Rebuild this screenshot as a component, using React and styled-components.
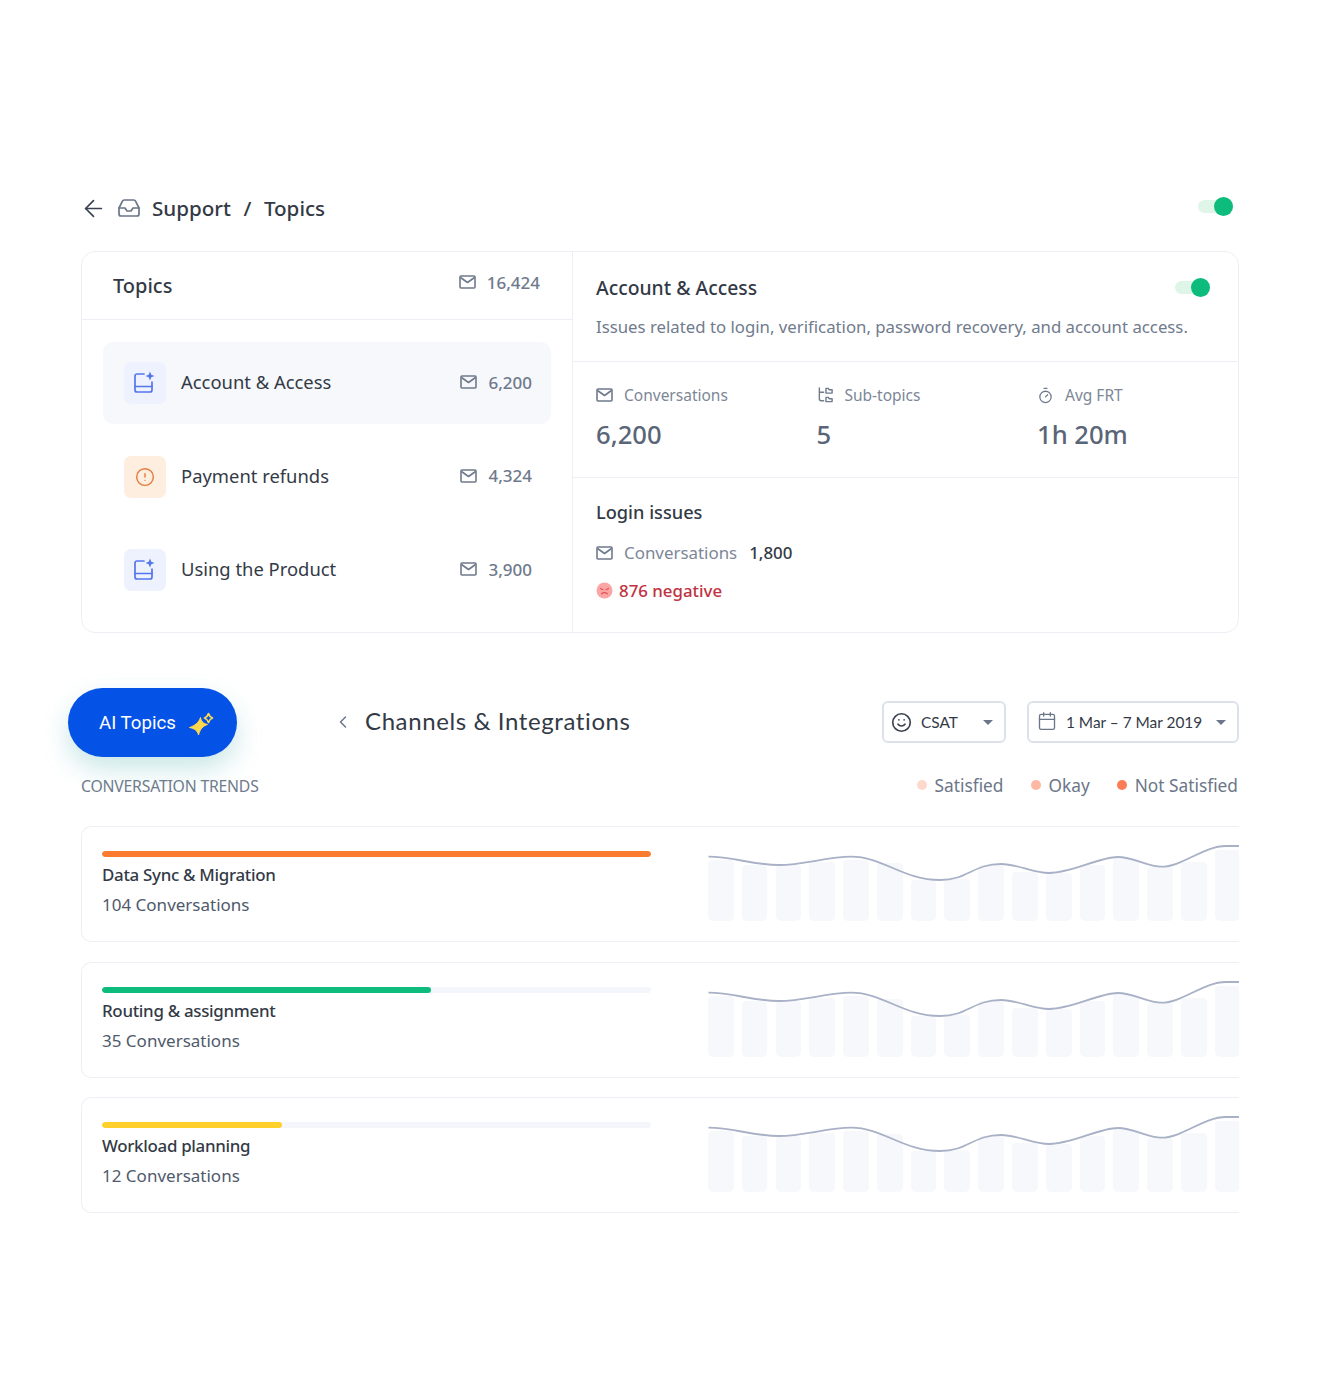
import React from "react";
import styled, { createGlobalStyle } from "styled-components";
import { ArrowLeft, Inbox, Timer, ChevronLeft, Smile, Calendar, CircleAlert } from "lucide-react";

const GlobalStyle = createGlobalStyle`
  html, body { margin: 0; padding: 0; background: #fff; }
  body { font-family: "Noto Sans", "Open Sans", sans-serif; color: #2f3541; }
`;

const Page = styled.div`
  width: 1320px;
  height: 1400px;
  box-sizing: border-box;
  padding: 190px 81px 0;
`;

const TopBar = styled.header`
  display: flex;
  align-items: center;
  height: 36px;
  margin-bottom: 25px;
  color: #333a46;
`;

const Crumbs = styled.div`
  display: flex;
  align-items: center;
  flex: 1;
  font-size: 20.6px;
  font-weight: 500;
  svg:first-child { margin: 0 10px 0 -1px; color: #3a4250; }
  svg:nth-child(2) { margin-right: 11px; color: #6b7688; }
  span { margin: 0 12.5px; }
`;

const Toggle = styled.div`
  position: relative;
  width: 35px;
  height: 13px;
  border-radius: 7px;
  background: #dff5e8;
  margin-right: ${(p) => p.$right || 0}px;
  margin-bottom: ${(p) => p.$lift || 0}px;
  &::after {
    content: "";
    position: absolute;
    right: 0;
    top: -3px;
    width: 19px;
    height: 19px;
    border-radius: 50%;
    background: #0dbb7d;
  }
`;

const Panel = styled.section`
  display: grid;
  grid-template-columns: 491px minmax(0, 1fr);
  height: 382px;
  box-sizing: border-box;
  border: 1px solid #edeff4;
  border-radius: 14px;
`;

const LeftPane = styled.div`
  border-right: 1px solid #edeff4;
`;

const LeftHead = styled.div`
  display: flex;
  align-items: center;
  justify-content: space-between;
  height: 68px;
  box-sizing: border-box;
  padding: 0 32px 0 31px;
  border-bottom: 1px solid #edeff4;
  h2 { margin: 0; font-size: 20px; font-weight: 500; color: #333a46; }
`;

const Count = styled.div`
  display: flex;
  align-items: center;
  gap: 11px;
  font-size: 17px;
  font-weight: 500;
  color: #6f7a8c;
  padding-bottom: ${(p) => p.$lift || 2}px;
`;

const TopicList = styled.div`
  display: flex;
  flex-direction: column;
  gap: 11.5px;
  padding: 22px 21px 0;
`;

const Topic = styled.div`
  display: flex;
  align-items: center;
  height: 82px;
  padding: 0 19px 0 21px;
  border-radius: 10px;
  background: ${(p) => (p.$active ? "#f6f8fc" : "transparent")};
`;

const TopicIcon = styled.div`
  display: flex;
  align-items: center;
  justify-content: center;
  width: 42px;
  height: 42px;
  border-radius: 7px;
  margin-right: 15px;
  background: ${(p) => (p.$warn ? "#fdeee0" : "#eef2fe")};
  color: ${(p) => (p.$warn ? "#e57a3c" : "#5575ea")};
`;

const TopicName = styled.div`
  flex: 1;
  padding-bottom: 3px;
  font-size: 18.4px;
  color: #333a46;
`;

const RightPane = styled.div`
  display: flex;
  flex-direction: column;
`;

const Summary = styled.div`
  height: 110px;
  box-sizing: border-box;
  padding: 22px 28px 0 23px;
  border-bottom: 1px solid #edeff4;
  p { margin: 14px 0 0; font-size: 16.77px; color: #707b8d; white-space: nowrap; }
`;

const SummaryTitle = styled.div`
  display: flex;
  align-items: center;
  justify-content: space-between;
  font-size: 19.35px;
  font-weight: 500;
  color: #333a46;
`;

const Stats = styled.div`
  display: grid;
  grid-template-columns: repeat(3, 220.5px);
  height: 116px;
  box-sizing: border-box;
  padding: 22px 0 0 23px;
  border-bottom: 1px solid #edeff4;
`;

const StatLabel = styled.div`
  display: flex;
  align-items: center;
  gap: 11px;
  font-size: 15.5px;
  color: #7d8797;
`;

const StatValue = styled.div`
  margin-top: 11px;
  font-size: 25.6px;
  font-weight: 500;
  color: #5a6577;
`;

const Detail = styled.div`
  padding: 22px 23px 0;
  h3 { margin: 0; font-size: 18.2px; font-weight: 500; color: #333a46; }
`;

const DetailRow = styled.div`
  display: flex;
  align-items: center;
  gap: 11px;
  margin-top: 17px;
  font-size: 16.9px;
  color: #7d8797;
  b { font-size: 16.9px; font-weight: 500; color: #333a46; margin-left: 1px; }
`;

const Negative = styled.div`
  display: flex;
  align-items: center;
  gap: 6px;
  margin-top: 15px;
  font-size: 16.85px;
  font-weight: 500;
  color: #c0323f;
`;

const Lower = styled.section`
  position: relative;
  margin-top: 68px;
`;

const AiPill = styled.button`
  position: absolute;
  left: -13px;
  top: -13px;
  display: flex;
  align-items: center;
  gap: 13px;
  width: 169px;
  height: 69px;
  box-sizing: border-box;
  padding: 0 0 0 31px;
  border: 0;
  border-radius: 35px;
  background: #0553e6;
  color: #fff;
  font-family: Roboto, sans-serif;
  font-size: 18.7px;
  box-shadow: 0 12px 26px rgba(70, 170, 170, 0.28);
`;

const LowerHead = styled.div`
  display: flex;
  align-items: center;
  height: 42px;
  padding-left: 252px;
`;

const BackChevron = styled(ChevronLeft)`
  color: #6b7688;
`;

const LowerTitle = styled.h2`
  flex: 1;
  margin: 0 0 4px 12px;
  font-family: Lato, sans-serif;
  font-size: 24px;
  font-weight: 400;
  letter-spacing: 0.6px;
  color: #333a46;
`;

const Picker = styled.div`
  display: flex;
  align-items: center;
  width: ${(p) => p.$w}px;
  height: 42px;
  box-sizing: border-box;
  margin-left: ${(p) => p.$gap || 0}px;
  padding: 0 11px 0 8px;
  border: 2px solid #dde1ea;
  border-radius: 6px;
  font-family: Lato, sans-serif;
  font-size: 15.4px;
  color: #333a46;
  span { flex: 1; margin-left: 9px; white-space: nowrap; }
  i {
    width: 0;
    height: 0;
    border-left: 5px solid transparent;
    border-right: 5px solid transparent;
    border-top: 5px solid #6b7688;
  }
`;

const CsatIcon = styled(Smile)`
  color: #3a4250;
  margin-left: -1px;
`;

const DateIcon = styled(Calendar)`
  color: #6b7688;
  margin-bottom: 3px;
`;

const TrendHead = styled.div`
  display: flex;
  align-items: center;
  justify-content: space-between;
  height: 24px;
  margin: 31px 0 28px;
`;

const TrendLabel = styled.div`
  font-size: 15.75px;
  color: #707b8d;
  letter-spacing: -0.2px;
`;

const Legend = styled.div`
  display: flex;
  gap: 27px;
  margin: 0 1px 2px 0;
`;

const LegendItem = styled.div`
  display: flex;
  align-items: center;
  gap: 8px;
  font-size: 17.3px;
  color: #6b7688;
  &::before {
    content: "";
    width: 10px;
    height: 10px;
    border-radius: 50%;
    background: ${(p) => p.$color};
  }
`;

const TrendList = styled.div`
  display: flex;
  flex-direction: column;
  gap: 19.5px;
`;

const TrendCard = styled.article`
  display: flex;
  height: 116px;
  box-sizing: border-box;
  padding-left: 20px;
  border: 1px solid #edeff4;
  border-right: 0;
  border-radius: 10px 0 0 10px;
  overflow: hidden;
`;

const TrendInfo = styled.div`
  width: 549px;
  padding-top: 24px;
  h4 { margin: 6px 0 0; font-size: 16.9px; font-weight: 500; letter-spacing: -0.3px; color: #333a46; }
  p { margin: 7px 0 0; font-size: 17px; color: #4f5a6b; }
`;

const Track = styled.div`
  height: 6px;
  border-radius: 3px;
  background: #f5f6fb;
  overflow: hidden;
`;

const Fill = styled.div`
  height: 100%;
  border-radius: 3px;
  background: ${(p) => p.$color};
`;

const Chart = styled.div`
  position: relative;
  display: flex;
  align-items: flex-end;
  gap: 8.1px;
  width: 530px;
  height: 80px;
  margin: 14px 0 0 57px;
  svg { position: absolute; left: 0; top: 0; }
`;

const Bar = styled.div`
  flex: none;
  width: 25.7px;
  height: ${(p) => p.$h}px;
  border-radius: 4px 4px 5px 5px;
  background: #f6f8fc;
`;

const MailIcon = () => (
  <svg width="17" height="14" viewBox="0 0 17 14" fill="none" stroke="#6f7a8c" strokeWidth="1.600" strokeLinejoin="round">
    <rect x="1" y="1" width="15" height="12" rx="1" />
    <path d="M1.500 2.500l7 5 7-5" />
  </svg>
);

const BookSpark = () => (
  <svg width="22" height="24" viewBox="0 0 22 24" fill="none" stroke="currentColor" strokeWidth="1.700" strokeLinejoin="round" strokeLinecap="round">
    <path d="M10 3H3a2 2 0 0 0-2 2v14a2 2 0 0 0 2 2h13a2 2 0 0 0 2-2V11" />
    <path d="M1 15.500h17" />
    <path d="M16 .5l1.300 3.200 3.200 1.300-3.200 1.300-1.300 3.200-1.300-3.200-3.200-1.300 3.200-1.300z" fill="currentColor" stroke="none" />
  </svg>
);

const SubTopics = () => (
  <svg width="17" height="18" viewBox="0 0 18 18" fill="none" stroke="#6f7a8c" strokeWidth="1.500" strokeLinejoin="round" strokeLinecap="round">
    <path d="M2.500 1.500v11.500a2 2 0 0 0 2 2h2.500M2.500 6h4.500" />
    <path d="M9.500 2h2.500l1 1.500h3v3.500h-6.500z" />
    <path d="M9.500 11.500h2.500l1 1.500h3v3h-6.500z" />
  </svg>
);

const AngryFace = () => (
  <svg width="17" height="17" viewBox="0 0 17 17" fill="none">
    <circle cx="8.500" cy="8.500" r="8" fill="#fca5a5" />
    <path d="M4.500 6.500l2.500 1.200M12.500 6.500L10 7.700M5.500 11.800c1.500-1.500 4.500-1.500 6 0" stroke="#e0525c" strokeWidth="1.200" strokeLinecap="round" />
  </svg>
);

const Sparkles = () => (
  <svg width="26" height="26" viewBox="0 0 26 26">
    <path d="M11.500 7.500C12 11 14 13.500 18.500 14.500 14 16 11 19 9.500 25 8.500 20.500 5.500 18.500.5 17.500 5.500 16 10 12.500 11.500 7.500z" fill="#ffd84d" stroke="#ffd84d" strokeWidth="1" strokeLinejoin="round" />
    <path d="M19.500 3.500c.5 2 1.700 3.500 4 4.500-2.300 1-3.500 2.500-4 4.500-.5-2-1.700-3.500-4-4.500 2.300-1 3.500-2.500 4-4.500z" fill="none" stroke="#ffd84d" strokeWidth="1.700" strokeLinejoin="round" />
  </svg>
);

const topics = [
  { name: "Account & Access", count: "6,200", active: true },
  { name: "Payment refunds", count: "4,324", warn: true },
  { name: "Using the Product", count: "3,900" },
];

const trends = [
  { name: "Data Sync & Migration", sub: "104 Conversations", pct: 100, color: "#f97b2e" },
  { name: "Routing & assignment", sub: "35 Conversations", pct: 60, color: "#0dbb7d" },
  { name: "Workload planning", sub: "12 Conversations", pct: 32.700, color: "#ffd02b" },
];

const barHeights = [61, 56, 56, 59, 61, 58, 41, 42, 56, 49, 48, 56, 63, 54, 59, 71];
const curve =
  "M0.500 15.700 C25 15.700 45 24 71 24 C95 24 120 15.700 143 15.700 C175 15.700 195 39 232 39 C260 39 265 23 293 23 C310 23 325 32 341 32 C365 32 390 16 410 16 C425 16 440 25.700 453 25.700 C475 25.700 495 5 518 5 L531 5";

const App = () => (
  <Page>
    <GlobalStyle />
    <TopBar>
      <Crumbs>
        <ArrowLeft size={27} strokeWidth={1.500} />
        <Inbox size={24} strokeWidth={1.700} />
        Support<span>/</span>Topics
      </Crumbs>
      <Toggle $right={6} $lift={4} />
    </TopBar>

    <Panel>
      <LeftPane>
        <LeftHead>
          <h2>Topics</h2>
          <Count $lift={7}>
            <MailIcon />
            16,424
          </Count>
        </LeftHead>
        <TopicList>
          {topics.map((t) => (
            <Topic key={t.name} $active={t.active}>
              <TopicIcon $warn={t.warn}>
                {t.warn ? <CircleAlert size={20} strokeWidth={1.700} /> : <BookSpark />}
              </TopicIcon>
              <TopicName>{t.name}</TopicName>
              <Count>
                <MailIcon />
                {t.count}
              </Count>
            </Topic>
          ))}
        </TopicList>
      </LeftPane>

      <RightPane>
        <Summary>
          <SummaryTitle>
            Account &amp; Access
            <Toggle />
          </SummaryTitle>
          <p>Issues related to login, verification, password recovery, and account access.</p>
        </Summary>
        <Stats>
          <div>
            <StatLabel><MailIcon />Conversations</StatLabel>
            <StatValue>6,200</StatValue>
          </div>
          <div>
            <StatLabel><SubTopics />Sub-topics</StatLabel>
            <StatValue>5</StatValue>
          </div>
          <div>
            <StatLabel><Timer size={17} strokeWidth={1.800} color="#6f7a8c" />Avg FRT</StatLabel>
            <StatValue>1h 20m</StatValue>
          </div>
        </Stats>
        <Detail>
          <h3>Login issues</h3>
          <DetailRow>
            <MailIcon />
            Conversations
            <b>1,800</b>
          </DetailRow>
          <Negative>
            <AngryFace />
            876 negative
          </Negative>
        </Detail>
      </RightPane>
    </Panel>

    <Lower>
      <AiPill>
        AI Topics
        <Sparkles />
      </AiPill>
      <LowerHead>
        <BackChevron size={20} strokeWidth={1.800} />
        <LowerTitle>Channels &amp; Integrations</LowerTitle>
        <Picker $w={124}>
          <CsatIcon size={21} strokeWidth={1.900} />
          <span>CSAT</span>
          <i />
        </Picker>
        <Picker $w={212} $gap={21}>
          <DateIcon size={20} strokeWidth={1.600} />
          <span>1 Mar – 7 Mar 2019</span>
          <i />
        </Picker>
      </LowerHead>

      <TrendHead>
        <TrendLabel>CONVERSATION TRENDS</TrendLabel>
        <Legend>
          <LegendItem $color="#fdd9cc">Satisfied</LegendItem>
          <LegendItem $color="#fdb8a4">Okay</LegendItem>
          <LegendItem $color="#fb7d55">Not Satisfied</LegendItem>
        </Legend>
      </TrendHead>

      <TrendList>
        {trends.map((t) => (
          <TrendCard key={t.name}>
            <TrendInfo>
              <Track>
                <Fill $color={t.color} style={{ width: `${t.pct}%` }} />
              </Track>
              <h4>{t.name}</h4>
              <p>{t.sub}</p>
            </TrendInfo>
            <Chart>
              {barHeights.map((h, i) => (
                <Bar key={i} $h={h} />
              ))}
              <svg width="531" height="45" viewBox="0 0 531 45" fill="none">
                <path d={curve} stroke="#a9b1c6" strokeWidth="1.800" />
              </svg>
            </Chart>
          </TrendCard>
        ))}
      </TrendList>
    </Lower>
  </Page>
);

export default App;
